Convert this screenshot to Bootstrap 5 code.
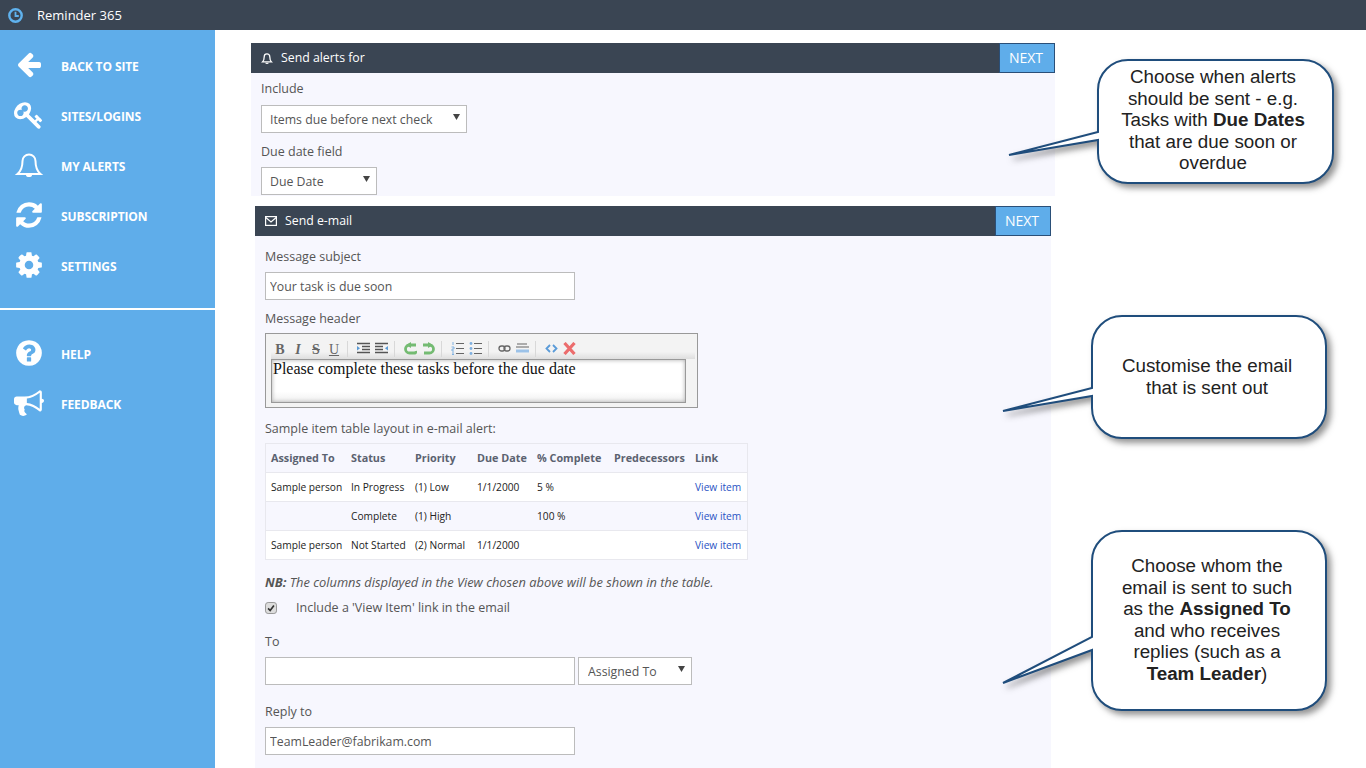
<!DOCTYPE html>
<html lang="en">
<head>
<meta charset="utf-8">
<title>Reminder 365</title>
<link href="https://cdn.jsdelivr.net/npm/bootstrap@5.3.0/dist/css/bootstrap.min.css" rel="stylesheet">
<style>
html,body{height:768px;overflow:hidden;}
body{font-family:"Open Sans","Noto Sans",sans-serif;font-size:12.5px;color:#555;background:#fff;}
.page-shell{height:768px;position:relative;overflow:hidden;}
.topbar{height:30px;background:#3a4553;color:#fff;padding-left:8px;padding-top:1px;font-size:13px;gap:14px;}
.side{width:215px;background:#5fadea;flex:none;padding-top:10px;}
.side-row{height:50px;padding-left:14px;gap:17px;color:#fff;font-weight:700;font-size:12px;letter-spacing:-.1px;text-decoration:none;}
.side-row span{padding-top:4px;}
.side-ico{width:30px;height:30px;fill:#fff;flex:none;}
.side-rule{height:2px;background:#fff;margin:18px 0 18px;}
.workarea{flex:1 1 auto;height:738px;overflow:hidden;padding-top:13px;}
.panel-one{width:804px;margin-left:36px;background:#f7f7fe;height:153px;}
.panel-two{width:796px;margin-left:40px;margin-top:10px;background:#f7f7fe;height:570px;}
.panel-head{height:30px;background:#3a4553;color:#fff;padding-left:10px;gap:8px;font-size:12.3px;}
.next-btn{flex:none;width:56px;height:30px;background:#5fadea;border:1px solid #2a4f78;border-radius:0;color:#fff;font-size:14px;padding:0 2px 2px 0;}
.panel-body-a{padding:5px 10px 0;}
.panel-body-b{padding:10px 10px 0;}
.fld-label{display:block;height:20px;line-height:22px;margin:0;}
.gap-after{margin-top:8px;}
.ctl{height:28px;border-radius:0;border:1px solid #bcbcbc;font-size:12.3px;color:#555;padding:0 4px;background-color:#fff;box-shadow:none;}
.ctl-wide{width:310px;}
.sel{height:28px;border-radius:0;border:1px solid #bcbcbc;font-size:12.3px;color:#555;padding:2px 20px 0 8px;background-color:#fff;background-image:url("data:image/svg+xml,%3Csvg xmlns='http://www.w3.org/2000/svg' width='7' height='6'%3E%3Cpath d='M0 0h7L3.5 6z' fill='%23444'/%3E%3C/svg%3E");background-size:7px 6px;background-position:right 6px top 8px;}
.sel-a{width:206px;margin-top:7px;}
.sel-b{width:116px;margin-top:6px;}
.sel-c{width:114px;padding-left:9px;}
.mt-six{margin-top:6px;}
.mt-five{margin-top:5px;}
.to-row{gap:3px;}
.editor{width:433px;height:75px;border:1px solid #999;background:#f3f3f3;padding:7px 11px 5px 5px;}
.tb{height:18px;gap:0;background:linear-gradient(#f3f3f3 0,#f3f3f3 60%,#dedede 100%);margin-right:-9px;}
.tb-slot{width:18px;text-align:center;font:700 14px "Liberation Serif",serif;color:#666;line-height:17px;}
.tb-sep{width:1px;height:16px;background:#d8d8d8;margin:0 9px 0 1px;}
.tb-ico{width:13px;height:13px;margin:1px 5px 0 0;}
.edit-area{height:44px;background:linear-gradient(#fff 75%,#f0f0f0);border:1px solid #999;box-shadow:inset 0 0 4px #aaa;padding:0 1px;font:16px/18px "Liberation Serif",serif;color:#111;white-space:nowrap;}
.sample-label{margin-top:10px;}
.mini-table{table-layout:fixed;width:482px;margin:5px 0 0;border:1px solid #e8e8ee;font-size:10.2px;color:#222;background:#fff;border-collapse:collapse;}
.mini-table th,.mini-table td{height:29px;padding:2px 0 0 5px;border-bottom:1px solid #e8e8ee;white-space:nowrap;overflow:visible;background:transparent;box-shadow:none;color:inherit;vertical-align:middle;font-weight:400;}
.mini-table th{font-weight:700;color:#5b6270;font-size:10.8px;padding-top:0;}
.mini-table a{color:#2b54c4;text-decoration:none;}
.row-tint{background:#f7f7fe;}
.c1{width:80.5px}.c2{width:64px}.c3{width:62px}.c4{width:60px}.c5{width:77px}.c6{width:81px}.c7{width:57.5px}
.nb-line{margin-top:12px;height:20px;line-height:20px;font-style:italic;font-size:12.85px;}
.chk-line{margin-top:6px;height:20px;gap:19px;}
.chk-box{width:12px;height:12px;margin:0;border-radius:2px;border:1px solid #999;}
.chk-box:checked{background-color:#ddd;border-color:#999;background-image:url("data:image/svg+xml,%3Csvg xmlns='http://www.w3.org/2000/svg' viewBox='0 0 12 12'%3E%3Cpath d='M2.5 6.5l2.5 2.5 4.5-6' fill='none' stroke='%23333' stroke-width='2'/%3E%3C/svg%3E");}
.to-label{margin-top:13px;}
.reply-label{margin-top:16px;}
.tip{position:absolute;overflow:visible;}
.tip path{fill:#fff;stroke:#1f4d7c;stroke-width:2;filter:drop-shadow(4px 4px 3px rgba(40,40,40,.5));}
.tip-a{left:1000px;top:50px;width:350px;height:145px;}
.tip-b{left:1000px;top:306px;width:350px;height:145px;}
.tip-c{left:1000px;top:521px;width:350px;height:200px;}
.tip-text{position:absolute;text-align:center;font:18.8px/21.6px "Liberation Sans",Arial,sans-serif;color:#222;width:234px;}
.tx-a{left:1096px;top:66px;}
.tx-b{left:1090px;top:355px;}
.tx-c{left:1090px;top:555px;}
</style>
</head>
<body>
<div class="page-shell">
  <div class="topbar d-flex align-items-center">
    <svg width="15" height="15" viewBox="0 0 15 15"><circle cx="7.500" cy="7.500" r="6.200" fill="none" stroke="#5fb2ee" stroke-width="2.400"/><path d="M7.500 3.800v4.200h3.300" fill="none" stroke="#5fb2ee" stroke-width="1.800"/></svg>
    <span>Reminder 365</span>
  </div>
  <div class="d-flex">
    <nav class="side">
      <a class="side-row d-flex align-items-center" href="#"><svg class="side-ico" viewBox="-64 0 1920 1920"><path d="M1664 896v128q0 53-32.500 90.500t-84.500 37.500h-704l293 294q38 36 38 90t-38 90l-75 76q-37 37-90 37-52 0-91-37l-651-652q-37-37-37-90 0-52 37-91l651-650q38-38 91-38 52 0 90 38l75 74q38 38 38 91t-38 91l-293 293h704q52 0 84.500 37.500t32.500 90.500z"/></svg><span>BACK TO SITE</span></a>
      <a class="side-row d-flex align-items-center" href="#"><svg class="side-ico" viewBox="0 0 1792 1792"><path d="M832 512q0-80-56-136t-136-56-136 56-56 136q0 42 19 83-41-19-83-19-80 0-136 56t-56 136 56 136 136 56 136-56 56-136q0-42-19-83 41 19 83 19 80 0 136-56t56-136zm851 704q0 17-49 66t-66 49q-9 0-28.500-16t-36.500-33-38.500-40-24.500-26l-96 96 220 220q28 28 28 68 0 42-39 81t-81 39q-40 0-68-28l-671-671q-176 131-365 131-163 0-265.500-102.500t-102.500-265.500q0-160 95-313t248-248 313-95q163 0 265.500 102.500t102.500 265.500q0 189-131 365l355 355 96-96q-3-3-26-24.500t-40-38.500-33-36.500-16-28.500q0-17 49-66t66-49q13 0 23 10 6 6 46 44.500t82 79.500 86.500 86 73 78 28.500 41z"/></svg><span>SITES/LOGINS</span></a>
      <a class="side-row d-flex align-items-center" href="#"><svg class="side-ico" viewBox="0 1 30 30"><path d="M3.500 25c3-2.500 5-5.500 5-13a6.500 6.500 0 0 1 13 0c0 7.500 2 10.500 5 13z" fill="none" stroke="#fff" stroke-width="2"/><path d="M12 26h6a3 2 0 0 1-6 0z"/></svg><span>MY ALERTS</span></a>
      <a class="side-row d-flex align-items-center" href="#"><svg class="side-ico" viewBox="0 0 1792 1792"><path d="M1639 1056q0 5-1 7-64 268-268 434.500t-478 166.500q-146 0-282.500-55t-243.500-157l-129 129q-19 19-45 19t-45-19-19-45v-448q0-26 19-45t45-19h448q26 0 45 19t19 45-19 45l-137 137q71 66 161 102t187 36q134 0 250-65t186-179q11-17 53-117 8-23 30-23h192q13 0 22.500 9.500t9.500 22.500zm25-800v448q0 26-19 45t-45 19h-448q-26 0-45-19t-19-45 19-45l138-138q-148-137-349-137-134 0-250 65t-186 179q-11 17-53 117-8 23-30 23h-199q-13 0-22.500-9.500t-9.500-22.500v-7q65-268 270-434.500t480-166.500q146 0 284 55.500t245 156.500l130-129q19-19 45-19t45 19 19 45z"/></svg><span>SUBSCRIPTION</span></a>
      <a class="side-row d-flex align-items-center" href="#"><svg class="side-ico" viewBox="0 0 1792 1792"><path d="M1152 896q0-106-75-181t-181-75-181 75-75 181 75 181 181 75 181-75 75-181zm512-109v222q0 12-8 23t-20 13l-185 28q-19 54-39 91 35 50 107 138 10 12 10 25t-9 23q-27 37-99 108t-94 71q-12 0-26-9l-138-108q-44 23-91 38-16 136-29 186-7 28-36 28h-222q-14 0-24.500-8.500t-11.500-21.500l-28-184q-49-16-90-37l-141 107q-10 9-25 9-14 0-25-11-126-114-165-168-7-10-7-23 0-12 8-23 15-21 51-66.500t54-70.500q-27-50-41-99l-183-27q-13-2-21-12.500t-8-23.500v-222q0-12 8-23t19-13l186-28q14-46 39-92-40-57-107-138-10-12-10-24 0-10 9-23 26-36 98.500-107.500t94.500-71.500q13 0 26 10l138 107q44-23 91-38 16-136 29-186 7-28 36-28h222q14 0 24.500 8.500t11.500 21.500l28 184q49 16 90 37l142-107q9-9 24-9 13 0 25 10 129 119 165 170 7 8 7 22 0 12-8 23-15 21-51 66.500t-54 70.500q26 50 41 98l183 28q13 2 21 12.500t8 23.500z"/></svg><span>SETTINGS</span></a>
      <div class="side-rule"></div>
      <a class="side-row d-flex align-items-center" href="#"><svg class="side-ico" viewBox="0 0 1792 1792"><path d="M1024 1376v-192q0-14-9-23t-23-9h-192q-14 0-23 9t-9 23v192q0 14 9 23t23 9h192q14 0 23-9t9-23zm256-672q0-88-55.500-163t-138.500-116-170-41q-243 0-371 213-15 24 8 42l132 100q7 6 19 6 16 0 25-12 53-68 86-92 34-24 86-24 48 0 85.500 26t37.500 59q0 38-20 61t-68 45q-63 28-115.500 86.500t-52.500 125.500v36q0 14 9 23t23 9h192q14 0 23-9t9-23q0-19 21.500-49.500t54.500-49.500q32-18 49-28.500t46-35 44.500-48 28-60.500 12.500-81zm384 192q0 209-103 385.500t-279.500 279.500-385.500 103-385.500-103-279.500-279.500-103-385.500 103-385.500 279.500-279.500 385.500-103 385.500 103 279.500 279.500 103 385.500z"/></svg><span>HELP</span></a>
      <a class="side-row d-flex align-items-center" href="#"><svg class="side-ico" viewBox="0 0 1792 1792"><path d="M1664 640q53 0 90.500 37.500t37.500 90.500-37.500 90.500-90.500 37.500v384q0 52-38 90t-90 38q-417-347-812-380-58 19-91 66t-31 100.500 40 92.500q-20 33-23 65.500t6 58 33.500 55 48 50 61.500 50.500q-29 58-111.500 83t-168.500 11.500-132-55.500q-7-23-29.500-87.500t-32-94.500-23-89-15-101 3.500-98.500 22-110.500h-122q-66 0-113-47t-47-113v-192q0-66 47-113t113-47h480q435 0 896-384 52 0 90 38t38 90v384zm-128 604v-954q-394 302-768 343v270q377 42 768 341z"/></svg><span>FEEDBACK</span></a>
    </nav>
    <main class="workarea">
      <section class="panel-one">
        <div class="panel-head d-flex align-items-center">
          <svg width="12" height="12" viewBox="2 1 26 28"><path d="M4.500 24c2.500-2.500 4-5.500 4-12a6.500 6.500 0 0 1 13 0c0 6.500 1.500 9.500 4 12z" fill="none" stroke="#fff" stroke-width="3"/><path d="M11 26h8a4 3 0 0 1-8 0z" fill="#fff"/></svg>
          <span class="flex-grow-1">Send alerts for</span>
          <button class="btn next-btn" type="button">NEXT</button>
        </div>
        <div class="panel-body-a">
          <label class="fld-label">Include</label>
          <select class="form-select sel sel-a"><option>Items due before next check</option></select>
          <label class="fld-label gap-after">Due date field</label>
          <select class="form-select sel sel-b"><option>Due Date</option></select>
        </div>
      </section>
      <section class="panel-two">
        <div class="panel-head d-flex align-items-center">
          <svg width="12" height="10" viewBox="0 0 12 10"><rect x=".6" y=".6" width="10.800" height="8.800" fill="none" stroke="#fff" stroke-width="1.200"/><path d="M.8 1.500L6 6l5.200-4.500" fill="none" stroke="#fff" stroke-width="1.200"/></svg>
          <span class="flex-grow-1">Send e-mail</span>
          <button class="btn next-btn" type="button">NEXT</button>
        </div>
        <div class="panel-body-b">
          <label class="fld-label">Message subject</label>
          <input class="form-control ctl ctl-wide mt-six" value="Your task is due soon">
          <label class="fld-label gap-after">Message header</label>
          <div class="editor mt-five">
            <div class="tb d-flex align-items-start">
              <span class="tb-slot">B</span><span class="tb-slot fst-italic">I</span><span class="tb-slot text-decoration-line-through">S</span><span class="tb-slot text-decoration-underline fw-normal">U</span>
              <span class="tb-sep ms-1"></span>
              <svg class="tb-ico" viewBox="0 0 13 13"><path d="M0 1.500h13M5 4.500h8M5 7.500h8M0 10.500h13" stroke="#555" stroke-width="1.300"/><path d="M0 4l3 2.200-3 2.200z" fill="#5b9bd5"/></svg>
              <svg class="tb-ico" viewBox="0 0 13 13"><path d="M0 1.500h13M0 4.500h8M0 7.500h8M0 10.500h13" stroke="#555" stroke-width="1.300"/><path d="M13 4l-3 2.200 3 2.200z" fill="#5b9bd5"/></svg>
              <span class="tb-sep"></span>
              <svg class="tb-ico" viewBox="0 0 13 13"><path d="M12 3H5.500a4 4 0 0 0 0 8H11a2 2 0 0 0 1-2" fill="none" stroke="#74bb72" stroke-width="2.800"/><path d="M7 0v6L2 3z" fill="#74bb72"/></svg>
              <svg class="tb-ico" viewBox="0 0 13 13"><path d="M1 3h6.500a4 4 0 0 1 0 8H2" fill="none" stroke="#74bb72" stroke-width="2.800"/><path d="M6 0v6l5-3z" fill="#74bb72"/></svg>
              <span class="tb-sep"></span>
              <svg class="tb-ico" viewBox="0 0 13 13"><path d="M5 1.500h8M5 6.500h8M5 11.500h8" stroke="#666" stroke-width="1.200"/><path d="M2 0v3M0.500 5h2.500v2H1v2h2M1 11h2M1 12.500h2" stroke="#7fb0e0" fill="none"/></svg>
              <svg class="tb-ico" viewBox="0 0 13 13"><path d="M5 1.500h8M5 6.500h8M5 11.500h8" stroke="#666" stroke-width="1.200"/><circle cx="2" cy="1.500" r="1.400" fill="#7fb0e0"/><circle cx="2" cy="6.500" r="1.400" fill="#7fb0e0"/><circle cx="2" cy="11.500" r="1.400" fill="#7fb0e0"/></svg>
              <span class="tb-sep"></span>
              <svg class="tb-ico" viewBox="0 0 13 13"><rect x="1" y="4" width="6" height="5" rx="2.500" fill="none" stroke="#666" stroke-width="1.300"/><rect x="6" y="4" width="6" height="5" rx="2.500" fill="none" stroke="#666" stroke-width="1.300"/></svg>
              <svg class="tb-ico" viewBox="0 0 13 13"><path d="M1 2h10M0 5h13" stroke="#666" stroke-width="1.100"/><path d="M0 9h13" stroke="#9cc2e8" stroke-width="3"/></svg>
              <span class="tb-sep"></span>
              <svg class="tb-ico" viewBox="0 0 13 13"><path d="M5 3L1.500 6.500 5 10" fill="none" stroke="#5a9bd8" stroke-width="1.800"/><path d="M8 3l3.500 3.500L8 10" fill="none" stroke="#5a9bd8" stroke-width="1.800"/></svg>
              <svg class="tb-ico" viewBox="0 0 13 13"><path d="M1.500 1l10 11M11.500 1l-10 11" stroke="#ec6d6d" stroke-width="3.200"/></svg>
            </div>
            <div class="edit-area">Please complete these tasks before the due date</div>
          </div>
          <label class="fld-label sample-label">Sample item table layout in e-mail alert:</label>
          <table class="table mini-table">
            <colgroup><col class="c1"><col class="c2"><col class="c3"><col class="c4"><col class="c5"><col class="c6"><col class="c7"></colgroup>
            <thead><tr class="row-tint"><th>Assigned To</th><th>Status</th><th>Priority</th><th>Due Date</th><th>% Complete</th><th>Predecessors</th><th>Link</th></tr></thead>
            <tbody>
              <tr><td>Sample person</td><td>In Progress</td><td>(1) Low</td><td>1/1/2000</td><td>5 %</td><td></td><td><a href="#">View item</a></td></tr>
              <tr class="row-tint"><td></td><td>Complete</td><td>(1) High</td><td></td><td>100 %</td><td></td><td><a href="#">View item</a></td></tr>
              <tr><td>Sample person</td><td>Not Started</td><td>(2) Normal</td><td>1/1/2000</td><td></td><td></td><td><a href="#">View item</a></td></tr>
            </tbody>
          </table>
          <div class="nb-line"><strong>NB:</strong> The columns displayed in the View chosen above will be shown in the table.</div>
          <div class="chk-line d-flex align-items-center"><input class="form-check-input chk-box" type="checkbox" checked><span>Include a 'View Item' link in the email</span></div>
          <label class="fld-label to-label">To</label>
          <div class="d-flex mt-six to-row">
            <input class="form-control ctl ctl-wide" value="">
            <select class="form-select sel sel-c"><option>Assigned To</option></select>
          </div>
          <label class="fld-label reply-label">Reply to</label>
          <input class="form-control ctl ctl-wide mt-six" value="TeamLeader@fabrikam.com">
        </div>
      </section>
    </main>
  </div>

  <svg class="tip tip-a" viewBox="1000 50 350 145"><path d="M1098 140V153A30 30 0 0 0 1128 183H1303A30 30 0 0 0 1333 153V90A30 30 0 0 0 1303 60H1128A30 30 0 0 0 1098 90V132L1009 155Z"/></svg>
  <div class="tip-text tx-a">Choose when alerts<br>should be sent - e.g.<br>Tasks with <b>Due Dates</b><br>that are due soon or<br>overdue</div>

  <svg class="tip tip-b" viewBox="1000 306 350 145"><path d="M1092 396V408A30 30 0 0 0 1122 438H1296A30 30 0 0 0 1326 408V346A30 30 0 0 0 1296 316H1122A30 30 0 0 0 1092 346V388L1003 411Z"/></svg>
  <div class="tip-text tx-b">Customise the email<br>that is sent out</div>

  <svg class="tip tip-c" viewBox="1000 521 350 200"><path d="M1092 650V680A30 30 0 0 0 1122 710H1296A30 30 0 0 0 1326 680V561A30 30 0 0 0 1296 531H1122A30 30 0 0 0 1092 561V637L1003 683Z"/></svg>
  <div class="tip-text tx-c">Choose whom the<br>email is sent to such<br>as the <b>Assigned To</b><br>and who receives<br>replies (such as a<br><b>Team Leader</b>)</div>
</div>
<script src="https://cdn.jsdelivr.net/npm/bootstrap@5.3.0/dist/js/bootstrap.bundle.min.js"></script>
</body>
</html>
